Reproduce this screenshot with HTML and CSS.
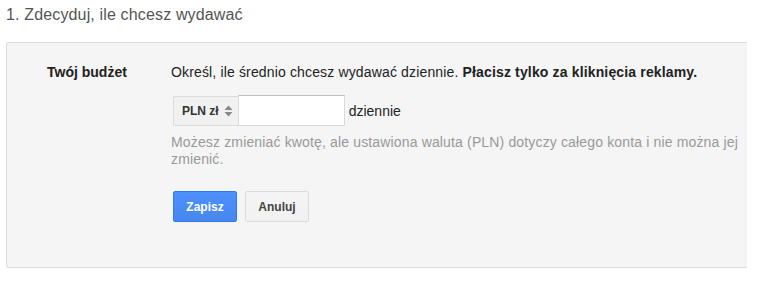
FILE: index.html
```html
<!DOCTYPE html>
<html lang="pl">
<head>
    <meta charset="UTF-8" />
    <title>Zdecyduj, ile chcesz wydawać</title>
    <link rel="stylesheet" href="styles.css">
</head>
<body>
    <h2 class="step-title">1. Zdecyduj, ile chcesz wydawać</h2>
    <div class="panel">
        <div class="budget-row">
            <div class="budget-label">Twój budżet</div>
            <div class="budget-body">
                <p class="intro">Określ, ile średnio chcesz wydawać dziennie. <strong>Płacisz tylko za kliknięcia reklamy.</strong></p>
                <div class="amount-row">
                    <div class="currency">
                        <span>PLN zł</span>
                        <svg class="arrows" width="9" height="12" viewBox="0 0 9 12">
                            <path d="M4.5 0.5 L8.5 5 L0.5 5 Z" fill="#888" />
                            <path d="M0.5 7 L8.5 7 L4.5 11.5 Z" fill="#888" />
                        </svg>
                    </div>
                    <input class="amount" type="text" />
                    <span class="per-day">dziennie</span>
                </div>
                <p class="hint">Możesz zmieniać kwotę, ale ustawiona waluta (PLN) dotyczy całego konta i nie można jej zmienić.</p>
                <div class="actions">
                    <button class="btn btn-primary">Zapisz</button>
                    <button class="btn">Anuluj</button>
                </div>
            </div>
        </div>
    </div>
</body>
</html>
```

FILE: styles.css
```css
body {
    font-family: Arial, "Liberation Sans", sans-serif;
    font-size: 14px;
    color: #222;
    background: #fff;
    margin: 0;
    padding: 0 0 0 6px;
    overflow: hidden;
}
.step-title {
    font-size: 16px;
    font-weight: normal;
    color: #555;
    margin: 5px 0 0;
    line-height: 20px;
    letter-spacing: 0.15px;
}
.panel {
    margin-top: 17px;
    width: 741px;
    height: 226px;
    box-sizing: border-box;
    background: #f5f5f5;
    border: 1px solid #dcdcdc;
    border-right: none;
    border-radius: 3px 0 0 3px;
    padding: 20px 0 0 40px;
}
.budget-row {
    display: grid;
    grid-template-columns: 124px 1fr;
}
.budget-label {
    font-weight: bold;
    line-height: 18px;
}
.intro {
    margin: 0;
    line-height: 18px;
    letter-spacing: 0.15px;
}
.amount-row {
    display: flex;
    align-items: center;
    margin: 14px 0 0 2px;
}
.currency {
    display: flex;
    align-items: center;
    gap: 5px;
    height: 30px;
    box-sizing: border-box;
    padding: 0 5px 0 8px;
    border: 1px solid #dcdcdc;
    border-right: none;
    background: #f1f1f1;
    border-radius: 2px 0 0 2px;
    font-size: 12px;
    font-weight: bold;
    color: #333;
}
.amount {
    width: 107px;
    height: 31px;
    box-sizing: border-box;
    border: 1px solid #d9d9d9;
    border-top-color: #c0c0c0;
    background: #fff;
    margin: 0;
    font: inherit;
}
.per-day {
    margin-left: 4px;
}
.hint {
    margin: 8px 0 0;
    color: #999;
    line-height: 17px;
    letter-spacing: 0.15px;
    width: 580px;
}
.actions {
    display: flex;
    gap: 8px;
    margin: 23px 0 0 2px;
}
.btn {
    height: 31px;
    min-width: 64px;
    padding: 0 12px;
    font-family: inherit;
    font-size: 12px;
    font-weight: bold;
    color: #444;
    background: linear-gradient(#f5f5f5, #f1f1f1);
    border: 1px solid #dcdcdc;
    border-radius: 2px;
}
.btn-primary {
    color: #fff;
    background: linear-gradient(#4d90fe, #4787ed);
    border-color: #3079ed;
}
```
